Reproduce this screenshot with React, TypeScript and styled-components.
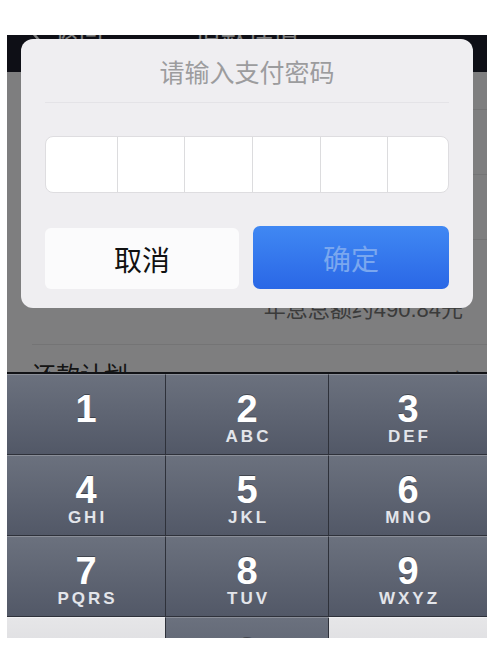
import * as React from "react";
import styled, { createGlobalStyle } from "styled-components";

const GlobalStyle = createGlobalStyle`
  html, body {
    margin: 0;
    padding: 0;
    background: #ffffff;
  }
  body {
    font-family: "Noto Sans CJK SC", "Noto Sans", sans-serif;
  }
`;

const keys = [
  { digit: "1", letters: "" },
  { digit: "2", letters: "ABC" },
  { digit: "3", letters: "DEF" },
  { digit: "4", letters: "GHI" },
  { digit: "5", letters: "JKL" },
  { digit: "6", letters: "MNO" },
  { digit: "7", letters: "PQRS" },
  { digit: "8", letters: "TUV" },
  { digit: "9", letters: "WXYZ" },
];

const App = () => {
  return (
    <>
      <GlobalStyle />
      <Page>
        <Screen>
          <NavBar>
            <NavBack>
              <svg width="12" height="22" viewBox="0 0 12 22">
                <path d="M10 2 L2 11 L10 20" stroke="#ffffff" strokeWidth="2.5" fill="none" />
              </svg>
              返回
            </NavBack>
            <NavTitle>借款详情</NavTitle>
            <NavSpacer />
          </NavBar>

          <Content>
            <ListRow height={38} />
            <ListRow height={65} />
            <ListRow height={65} />
            <ListRow height={105} align="flex-end">
              <Note>年息总额约490.84元</Note>
            </ListRow>
            <ListRow height={60} align="flex-start" noBorder>
              <RowLabel>还款计划</RowLabel>
              <Chevron>›</Chevron>
            </ListRow>
          </Content>

          <Mask />

          <Dialog>
            <DialogTitle>请输入支付密码</DialogTitle>
            <PinBox>
              {[0, 1, 2, 3, 4, 5].map((i) => (
                <PinCell key={i} />
              ))}
            </PinBox>
            <ButtonRow>
              <CancelButton>取消</CancelButton>
              <ConfirmButton>确定</ConfirmButton>
            </ButtonRow>
          </Dialog>

          <Keyboard>
            {keys.map((k) => (
              <Key key={k.digit}>
                <Digit>{k.digit}</Digit>
                {k.letters && <Letters>{k.letters}</Letters>}
              </Key>
            ))}
            <Key light />
            <Key>
              <Digit>0</Digit>
            </Key>
            <Key light />
          </Keyboard>
        </Screen>
      </Page>
    </>
  );
};

export default App;

const Page = styled.div`
  width: 503px;
  height: 664px;
  padding: 35px 0 0 7px;
  box-sizing: border-box;
  background: #ffffff;
`;

const Screen = styled.div`
  position: relative;
  width: 480px;
  height: 603px;
  overflow: hidden;
  display: flex;
  flex-direction: column;
  background: #fdfdfe;
`;

const NavBar = styled.div`
  height: 37px;
  flex: none;
  display: flex;
  align-items: flex-start;
  justify-content: space-between;
  padding: 0 22px;
  background: #1d1f2c;
  color: #ffffff;
  font-size: 24px;
  line-height: 24px;
  overflow: hidden;
`;

const NavBack = styled.div`
  display: flex;
  align-items: center;
  gap: 14px;
  margin-top: -16px;
  width: 90px;
`;

const NavTitle = styled.div`
  margin-top: -16px;
  font-size: 26px;
  line-height: 26px;
`;

const NavSpacer = styled.div`
  width: 90px;
`;

const Content = styled.div`
  height: 300px;
  flex: none;
  display: flex;
  flex-direction: column;
  background: #fdfdfe;
`;

const ListRow = styled.div<{ height: number; align?: string; noBorder?: boolean }>`
  height: ${(p) => p.height}px;
  flex: none;
  margin-left: 25px;
  padding-right: 24px;
  box-sizing: border-box;
  display: flex;
  justify-content: space-between;
  align-items: ${(p) => p.align || "center"};
  border-bottom: ${(p) => (p.noBorder ? "none" : "1px solid #e8e8ea")};
`;

const Note = styled.div`
  margin-left: auto;
  padding-bottom: 19px;
  font-size: 22px;
  line-height: 30px;
  color: #767676;
  font-family: "Liberation Sans", "Noto Sans CJK SC", sans-serif;
`;

const RowLabel = styled.div`
  padding-top: 14px;
  font-size: 24px;
  line-height: 30px;
  color: #2a2a2a;
`;

const Chevron = styled.div`
  padding-top: 12px;
  font-size: 28px;
  line-height: 30px;
  color: #9a9a9a;
`;

const Mask = styled.div`
  position: absolute;
  left: 0;
  top: 0;
  width: 100%;
  height: 337px;
  background: rgba(0, 0, 0, 0.5);
`;

const Dialog = styled.div`
  position: absolute;
  left: 14px;
  top: 4px;
  width: 452px;
  height: 269px;
  box-sizing: border-box;
  padding: 0 24px 19px;
  border-radius: 12px;
  background: #efeef1;
  display: flex;
  flex-direction: column;
`;

const DialogTitle = styled.div`
  height: 64px;
  box-sizing: border-box;
  border-bottom: 1px solid #e4e3e7;
  display: flex;
  align-items: center;
  justify-content: center;
  font-size: 25px;
  color: #9c9c9e;
`;

const PinBox = styled.div`
  margin-top: 33px;
  height: 57px;
  box-sizing: border-box;
  display: grid;
  grid-template-columns: 71px 67px 68px 68px 67px 1fr;
  border: 1px solid #dedde0;
  border-radius: 8px;
  background: #ffffff;
  overflow: hidden;
`;

const PinCell = styled.div`
  border-left: 1px solid #dcdcde;
  &:first-child {
    border-left: none;
  }
`;

const ButtonRow = styled.div`
  margin-top: auto;
  display: grid;
  grid-template-columns: 194px 196px;
  justify-content: space-between;
  align-items: end;
`;

const CancelButton = styled.div`
  height: 61px;
  border-radius: 6px;
  background: #fbfbfc;
  display: flex;
  align-items: center;
  justify-content: center;
  font-size: 28px;
  color: #111111;
`;

const ConfirmButton = styled.div`
  height: 63px;
  border-radius: 7px;
  background: linear-gradient(#4088f3, #2a67e6);
  display: flex;
  align-items: center;
  justify-content: center;
  font-size: 28px;
  color: #7aa7ef;
`;

const Keyboard = styled.div`
  flex: none;
  display: grid;
  grid-template-columns: 158px 163px 1fr;
  grid-auto-rows: 81px;
  border-top: 2px solid #111216;
  background: #2b2e36;
  font-family: "Liberation Sans", Arial, sans-serif;
`;

const Key = styled.div<{ light?: boolean }>`
  display: flex;
  flex-direction: column;
  align-items: center;
  padding-top: 15px;
  box-sizing: border-box;
  border-top: 1px solid ${(p) => (p.light ? "#f0f0f2" : "#8a8e98")};
  border-bottom: 1px solid #2e313a;
  border-left: 1px solid #2e313a;
  background: ${(p) =>
    p.light
      ? "linear-gradient(#e6e6e8, #d3d3d7)"
      : "linear-gradient(#6b717e, #525867)"};
  &:nth-child(3n + 1) {
    border-left: none;
  }
`;

const Digit = styled.div`
  font-size: 38px;
  line-height: 38px;
  font-weight: 700;
  color: #ffffff;
  text-shadow: 0 -1px 0 rgba(0, 0, 0, 0.35);
`;

const Letters = styled.div`
  font-size: 17px;
  line-height: 18px;
  font-weight: 700;
  letter-spacing: 3px;
  margin-right: -3px;
  color: #e3e5ea;
`;
